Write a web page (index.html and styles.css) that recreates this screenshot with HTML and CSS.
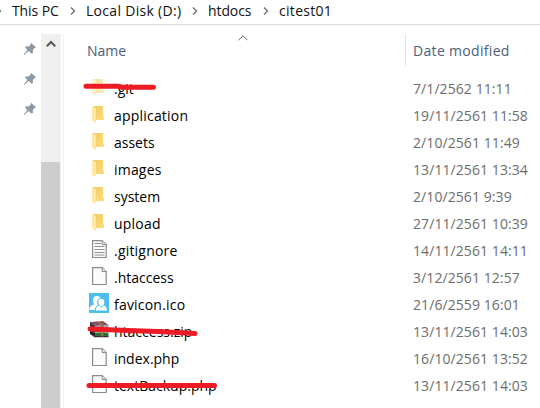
FILE: index.html
```html
<!DOCTYPE html>
<html lang="en">
<head>
<meta charset="utf-8">
<title>citest01</title>
<link rel="stylesheet" href="styles.css">
</head>
<body>
<svg class="defs" aria-hidden="true">
  <defs>
    <linearGradient id="gold" x1="0" x2="1" y1="0" y2="1"><stop offset="0" stop-color="#efca64"/><stop offset="1" stop-color="#ffdc7d"/></linearGradient>
    <symbol id="folder" viewBox="0 0 20 20"><path d="M4 2H14V12.5H15V16H4Z" fill="url(#gold)"/><path d="M3 2.2L7 4V19L3 16.7Z" fill="#ffe8a3"/></symbol>
    <symbol id="page" viewBox="0 0 20 20"><path d="M3.6 1.6H13.2L17.2 5.5V18.5H3.6Z" fill="#fafbfb" stroke="#8b8b8b" stroke-width="1.2"/><path d="M13.2 1.6V5.5H17.2" fill="#e2e2e2" stroke="#8b8b8b"/></symbol>
    <symbol id="text" viewBox="0 0 20 20"><use href="#page"/><path d="M5.5 4.5H12M5.5 7.5H15.5M5.5 10.5H15.5M5.5 13.5H15.5M5.5 16H15.5" stroke="#8e9292"/></symbol>
    <symbol id="people" viewBox="0 0 20 20"><path d="M0 0H20V20H0Z" fill="#4cbdec"/><path d="M0 17Q.5 12.6 5 11.5Q3.6 9 4 6.3Q4.7 3 8 3Q11 3 11.5 5Q7.8 6 8 10L9 12Q6 13.5 5.8 17Z" fill="#fff"/><path d="M12.3 5.8Q15.5 5.8 15.4 9.2Q15.3 11 14.2 12.3Q18 13.2 18 17.5H6.8Q7 13.2 10.5 12.3Q9 10.6 9.2 8.8Q9.4 5.8 12.3 5.8Z" fill="#fff"/><path d="M10.5 12.5L12.3 14.3L14.2 12.5" fill="none" stroke="#4cbdec"/></symbol>
    <symbol id="archive" viewBox="0 0 20 20"><path d="M1 2L14 1L19.5 5L6 6Z" fill="#825269"/><path d="M1 2L6 6V9L1 6Z" fill="#3c273e"/><path d="M6 6L19.5 5V8H6Z" fill="#a99ab3"/><path d="M1 6L6 9V13L1 10Z" fill="#30243c"/><path d="M6 9H19.5V12H6Z" fill="#3449a5"/><path d="M1 10L6 13V17L1 13Z" fill="#222"/><path d="M6 12.5H19.5V16H6Z" fill="#26763b"/><path d="M1 12.5L6 16H19.5V17.2H5.5L1 14Z" fill="#3d2b2e"/><path d="M11.5 2L14.5 5.5V16.5H12V6L9 2Z" fill="#986d42"/><path d="M11.5 10H15V13H11.5Z" fill="#f2cc59" stroke="#5c4630" stroke-width=".6"/></symbol>
    <symbol id="pin" viewBox="0 0 14 14"><path d="M8 .8L13.2 5.5L11.7 6L9.8 8.1L10 10.7L8.7 11.7L5.7 9L1.2 13L.7 12.4L4.4 7.9L1.9 5.3L3 4.2L5.8 4.4L7.8 2.3Z" fill="#8b99a5"/></symbol>
    <symbol id="next" viewBox="0 0 8 10"><path d="M2 1.5L5.5 5L2 8.5" fill="none" stroke="#777" stroke-width="1.5"/></symbol>
  </defs>
</svg>
<div class="window">
  <nav class="path">
    <svg class="sep first"><use href="#next"/></svg>
    <span class="crumb pc">This PC</span><svg class="sep"><use href="#next"/></svg>
    <span class="crumb disk">Local Disk (D:)</span><svg class="sep"><use href="#next"/></svg>
    <span class="crumb docs">htdocs</span><svg class="sep"><use href="#next"/></svg>
    <span class="crumb">citest01</span>
  </nav>
  <div class="body">
    <aside class="pins">
      <svg><use href="#pin"/></svg><svg><use href="#pin"/></svg><svg><use href="#pin"/></svg>
    </aside>
    <div class="scrollbar">
      <svg class="up" viewBox="0 0 10 8"><path d="M.8 6.2L5 2L9.2 6.2" fill="none" stroke="#555" stroke-width="2"/></svg>
      <div class="thumb"></div>
    </div>
    <main class="files">
      <header class="heads">
        <span class="head name">Name</span>
        <svg class="sort" viewBox="0 0 10 6"><path d="M.6 5.2L5 .8L9.4 5.2" fill="none" stroke="#666"/></svg>
        <span class="head date">Date modified</span>
      </header>
      <div class="row"><svg class="icon faded"><use href="#folder"/></svg><span class="file">.git</span><span class="time">7/1/2562 11:11</span></div>
      <div class="row"><svg class="icon"><use href="#folder"/></svg><span class="file wide">application</span><span class="time">19/11/2561 11:58</span></div>
      <div class="row"><svg class="icon"><use href="#folder"/></svg><span class="file">assets</span><span class="time">2/10/2561 11:49</span></div>
      <div class="row"><svg class="icon"><use href="#folder"/></svg><span class="file wide">images</span><span class="time">13/11/2561 13:34</span></div>
      <div class="row"><svg class="icon"><use href="#folder"/></svg><span class="file">system</span><span class="time">2/10/2561 9:39</span></div>
      <div class="row"><svg class="icon"><use href="#folder"/></svg><span class="file wide">upload</span><span class="time">27/11/2561 10:39</span></div>
      <div class="row"><svg class="icon"><use href="#text"/></svg><span class="file wide">.gitignore</span><span class="time">14/11/2561 14:11</span></div>
      <div class="row"><svg class="icon"><use href="#page"/></svg><span class="file">.htaccess</span><span class="time">3/12/2561 12:57</span></div>
      <div class="row"><svg class="icon"><use href="#people"/></svg><span class="file wide">favicon.ico</span><span class="time">21/6/2559 16:01</span></div>
      <div class="row"><svg class="icon"><use href="#archive"/></svg><span class="file">htaccess.zip</span><span class="time">13/11/2561 14:03</span></div>
      <div class="row"><svg class="icon"><use href="#page"/></svg><span class="file">index.php</span><span class="time">16/10/2561 13:52</span></div>
      <div class="row"><svg class="icon"><use href="#page"/></svg><span class="file">textBackup.php</span><span class="time">13/11/2561 14:03</span></div>
    </main>
  </div>
  <svg class="marks" viewBox="0 0 540 408"><path d="M86 86.3H118L122 87.3H153.5M90 329L128 330.5L158 331.5L195 333.5M89 385.5H214.5"/></svg>
</div>
</body>
</html>
```
FILE: styles.css
```css
* { box-sizing: border-box; }
body { margin: 0; background: #fff; font: 14px/20px "Open Sans", "Noto Sans", sans-serif; color: #111; }
svg { display: block; flex: none; }
.defs { position: absolute; width: 0; height: 0; }
.window { position: relative; width: 540px; height: 408px; overflow: hidden; }
.path { display: flex; align-items: center; height: 25px; padding-bottom: 3px; border-bottom: 1px solid #d9d9d9; white-space: nowrap; }
.sep { width: 8px; height: 10px; margin-right: 9px; }
.first { margin-left: -5px; margin-right: 9px; }
.crumb { letter-spacing: .3px; }
.pc { width: 57px; letter-spacing: -.1px; }
.disk { width: 105px; }
.docs { width: 54px; letter-spacing: -.1px; }
.body { display: flex; height: 383px; }
.pins { display: flex; flex-direction: column; gap: 16px; width: 41px; padding: 17px 0 0 23px; }
.pins svg { width: 14px; height: 14px; }
.scrollbar { width: 20px; margin-top: 9px; background: #f0f0f0; }
.up { width: 10px; height: 8px; margin: 6px 0 0 5px; }
.thumb { width: 19px; height: 246px; margin-top: 114px; background: #cdcdcd; }
.files { width: 477px; margin: 9px 0 0 2px; border-left: 1px solid #f3f3f3; }
.heads { display: flex; height: 32px; margin-bottom: 9px; color: #4c607a; }
.head { line-height: 33px; }
.name { width: 150px; padding-left: 23px; }
.sort { width: 10px; height: 6px; margin: 1px 157px 0 24px; }
.date { padding-left: 7px; border-left: 1px solid #e2e2e2; letter-spacing: .32px; }
.row { display: flex; align-items: center; height: 27px; padding-left: 25px; }
.icon { width: 20px; height: 20px; margin-bottom: 4px; }
.faded { opacity: .55; }
.file { width: 304px; padding-left: 5px; color: #000; }
.wide { letter-spacing: .2px; }
.time { color: #6d6d6d; letter-spacing: .08px; }
.marks { position: absolute; inset: 0; width: 540px; height: 408px; fill: none; stroke: #ed1c24; stroke-width: 5; stroke-linecap: round; stroke-linejoin: round; }
```
